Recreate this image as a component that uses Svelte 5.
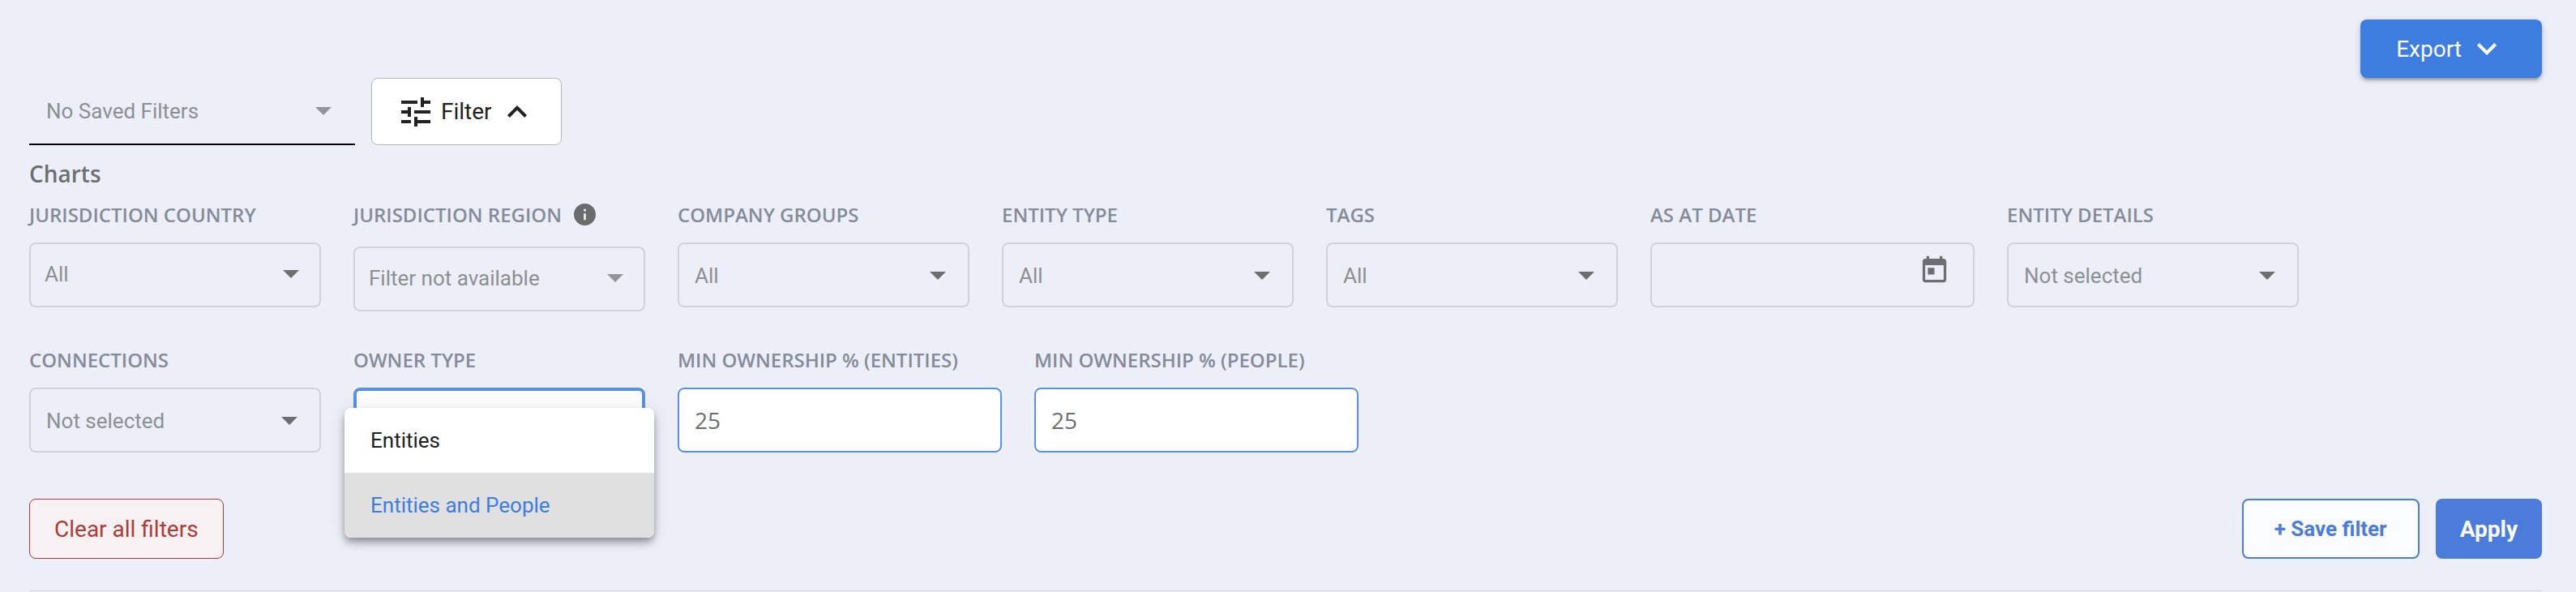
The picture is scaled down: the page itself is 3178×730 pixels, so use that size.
<script>
  const rowOne = [
    { id: 'country', label: 'Jurisdiction country', kind: 'select', value: 'All', tight: true },
    { id: 'region', label: 'Jurisdiction region', kind: 'select', value: 'Filter not available', info: true, tight: true, faded: true },
    { id: 'groups', label: 'Company groups', kind: 'select', value: 'All' },
    { id: 'entity-type', label: 'Entity type', kind: 'select', value: 'All' },
    { id: 'tags', label: 'Tags', kind: 'select', value: 'All' },
    { id: 'date', label: 'As at date', kind: 'date' },
    { id: 'details', label: 'Entity details', kind: 'select', value: 'Not selected' },
  ];
  const rowTwo = [
    { id: 'connections', label: 'Connections', kind: 'select', value: 'Not selected' },
    { id: 'owner', label: 'Owner type', kind: 'open' },
    { id: 'min-entities', label: 'Min ownership % (entities)', kind: 'number', value: '25' },
    { id: 'min-people', label: 'Min ownership % (people)', kind: 'number', value: '25' },
  ];
  const ownerOptions = ['Entities', 'Entities and People'];
  let owner = $state('Entities and People');
</script>

{#snippet arrow()}
  <svg class="arrow" viewBox="0 0 20 10" width="20" height="10" aria-hidden="true"><path d="M0 0h20L10 10z" /></svg>
{/snippet}

{#snippet field(f)}
  <div class="field" class:wide={f.kind === 'date' || f.kind === 'number'}>
    <div class="caption" class:noted={f.info}>
      <label for={f.id}>{f.label}</label>
      {#if f.info}
        <svg class="info" viewBox="2 2 20 20" width="27" height="27" aria-hidden="true">
          <path d="M12 2C6.48 2 2 6.48 2 12s4.48 10 10 10 10-4.48 10-10S17.52 2 12 2zm1 15h-2v-6h2v6zm0-8h-2V7h2v2z" />
        </svg>
      {/if}
    </div>
    {#if f.kind === 'select'}
      <div class="control" class:tight={f.tight} class:faded={f.faded}>
        <select id={f.id} disabled={f.faded}><option>{f.value}</option></select>
        {@render arrow()}
      </div>
    {:else if f.kind === 'date'}
      <div class="control">
        <input id={f.id} type="text" />
        <button class="calendar" type="button" aria-label="Open calendar">
          <svg viewBox="0 0 24 24" width="39" height="39" aria-hidden="true">
            <path d="M19 3h-1V1h-2v2H8V1H6v2H5c-1.11 0-1.99.9-1.99 2L3 19c0 1.1.89 2 2 2h14c1.1 0 2-.9 2-2V5c0-1.1-.9-2-2-2zm0 16H5V8h14v11zM7 10h5v5H7z" />
          </svg>
        </button>
      </div>
    {:else if f.kind === 'number'}
      <div class="control active"><input id={f.id} type="text" inputmode="numeric" value={f.value} /></div>
    {:else}
      <div class="control active focused">
        <select id={f.id} bind:value={owner}>
          {#each ownerOptions as o}<option>{o}</option>{/each}
        </select>
        <div class="menu" role="listbox" aria-label="Owner type">
          {#each ownerOptions as o}
            <button type="button" role="option" aria-selected={o === owner} class:selected={o === owner} onclick={() => (owner = o)}>{o}</button>
          {/each}
        </div>
      </div>
    {/if}
  </div>
{/snippet}

<main>
  <header>
    <button class="export" type="button">
      Export
      <svg viewBox="6 8.6 12 7.4" width="24" height="15" aria-hidden="true"><path d="M16.59 8.59L12 13.17 7.41 8.59 6 10l6 6 6-6z" /></svg>
    </button>
  </header>

  <div class="toolbar">
    <div class="saved">
      <select aria-label="Saved filters"><option>No Saved Filters</option></select>
      {@render arrow()}
    </div>
    <button class="filter" type="button">
      <svg viewBox="3 3 18 18" width="36" height="36" aria-hidden="true">
        <path d="M3 17v2h6v-2H3zM3 5v2h10V5H3zm10 16v-2h8v-2h-8v-2h-2v6h2zM7 9v2H3v2h4v2h2V9H7zm14 4v-2H11v2h10zm-6-4h2V7h4V5h-4V3h-2v6z" />
      </svg>
      <span>Filter</span>
      <svg viewBox="6 8 12 7.4" width="24" height="15" aria-hidden="true"><path d="M12 8l-6 6 1.41 1.41L12 10.83l4.59 4.58L18 14z" /></svg>
    </button>
  </div>

  <h2>Charts</h2>
  <div class="row">{#each rowOne as f}{@render field(f)}{/each}</div>
  <div class="row second">{#each rowTwo as f}{@render field(f)}{/each}</div>

  <footer>
    <button class="clear" type="button">Clear all filters</button>
    <button class="save" type="button">+ Save filter</button>
    <button class="apply" type="button">Apply</button>
  </footer>
</main>

<style>
  :global(body) {
    margin: 0;
    background: #eceff8;
  }
  main {
    box-sizing: border-box;
    margin: 0 42px 0 36px;
    padding-top: 24px;
    border-bottom: 1px solid #d0d2d6;
    font-family: Roboto, sans-serif;
    font-size: 26px;
    color: #212121;
  }
  main * {
    box-sizing: border-box;
  }
  button,
  select,
  input {
    margin: 0;
    font: inherit;
    color: inherit;
  }
  button {
    cursor: pointer;
  }
  svg {
    flex: none;
    fill: currentColor;
  }
  header {
    display: flex;
    justify-content: flex-end;
  }
  .export {
    display: flex;
    align-items: center;
    gap: 19px;
    height: 72px;
    padding: 0 56px 0 44px;
    border: 0;
    border-radius: 8px;
    background: #3d7de0;
    color: #fff;
    font-size: 28px;
    box-shadow: 0 6px 2px -4px rgba(0, 0, 0, 0.2), 0 4px 4px rgba(0, 0, 0, 0.14), 0 2px 10px rgba(0, 0, 0, 0.12);
  }
  .toolbar {
    display: flex;
    gap: 20px;
  }
  .saved {
    position: relative;
    display: flex;
    align-items: center;
    width: 402px;
    height: 83px;
    border-bottom: 2px solid #000;
    color: #8d8f92;
  }
  select,
  input {
    flex: 1;
    min-width: 0;
    height: 100%;
    padding: 0 19px;
    border: 0;
    outline: 0;
    background: none;
    appearance: none;
    opacity: 1;
  }
  .saved select {
    padding: 0 21px;
  }
  .arrow {
    position: absolute;
    right: 27px;
    fill: #6d6e70;
    pointer-events: none;
  }
  .saved .arrow {
    right: 29px;
    fill: #949597;
  }
  .filter {
    display: flex;
    align-items: center;
    height: 83px;
    padding: 0 42px 0 36px;
    border: 1px solid #b5b5b7;
    border-radius: 8px;
    background: #fff;
    font-size: 28px;
  }
  .filter span {
    margin: 0 19px 0 13px;
  }
  h2 {
    margin: 15px 0 0;
    font: 600 28px/40px "Open Sans", sans-serif;
    color: #6d6e70;
  }
  .row {
    display: flex;
    align-items: flex-start;
    gap: 40px;
    margin-top: 13px;
  }
  .second {
    margin-top: 42px;
  }
  .field {
    width: 360px;
  }
  .wide {
    width: 400px;
  }
  .caption {
    display: flex;
    align-items: center;
    gap: 15px;
    margin-bottom: 16px;
    font: 600 24px/36px "Open Sans", sans-serif;
    color: #858b98;
    text-transform: uppercase;
    white-space: nowrap;
  }
  .noted {
    margin-bottom: 21px;
  }
  .info {
    margin-bottom: 2px;
    fill: #6a6b6d;
  }
  .control {
    position: relative;
    display: flex;
    align-items: center;
    height: 80px;
    padding-top: 2px;
    border: 2px solid #d0d2d6;
    border-radius: 8px;
    color: #8d8f92;
  }
  .tight {
    padding: 0 0 2px;
  }
  .tight select {
    padding: 0 17px;
  }
  .tight .arrow {
    right: 25px;
  }
  .faded .arrow {
    fill: #949597;
  }
  .active {
    padding: 0;
    border: 0;
    border-radius: 0;
    background: #fff;
    color: #6d6e70;
  }
  .active > input,
  .active > select {
    border: 2px solid #5a91e4;
    border-radius: 8px;
  }
  .active > input {
    font: 28px "Open Sans", sans-serif;
  }
  .focused > select {
    border-width: 4px;
    color: transparent;
  }
  .calendar {
    display: flex;
    margin: 0 28px 14px 0;
    padding: 0;
    border: 0;
    background: none;
    color: #6d6e70;
  }
  .menu {
    position: absolute;
    z-index: 1;
    top: 25px;
    left: -11px;
    right: -11px;
    border-radius: 8px;
    background: #fff;
    box-shadow: 0 4px 8px -2px rgba(0, 0, 0, 0.3), 0 8px 10px rgba(0, 0, 0, 0.16), 0 2px 20px rgba(0, 0, 0, 0.12);
    overflow: hidden;
  }
  .menu button {
    display: block;
    width: 100%;
    height: 80px;
    padding: 0 32px;
    border: 0;
    background: none;
    color: #212121;
    text-align: left;
  }
  .menu .selected {
    background: #e0e0e0;
    color: #3d7de0;
  }
  footer {
    display: flex;
    gap: 20px;
    margin: 57px 0 39px;
  }
  footer button {
    height: 74px;
    border-radius: 8px;
    font-size: 28px;
  }
  .clear {
    margin-right: auto;
    padding: 0 30px;
    border: 1px solid #b03a34;
    background: #f8f1f4;
    color: #b03a34;
  }
  .save {
    padding: 0 38px;
    border: 2px solid #4b7bdb;
    background: #fbfcff;
    color: #4b7bdb;
    font-size: 26px;
    font-weight: 700;
  }
  .apply {
    padding: 0 30px;
    border: 0;
    background: #4b7bdb;
    color: #fff;
    font-weight: 700;
  }
</style>
